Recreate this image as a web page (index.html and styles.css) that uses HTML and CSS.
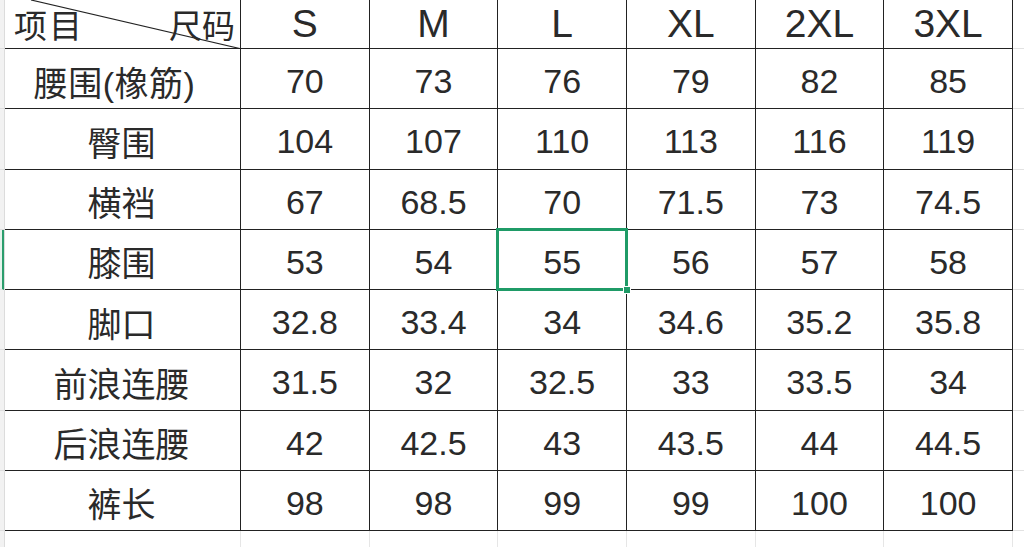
FILE: index.html
```html
<!DOCTYPE html>
<html lang="zh">
<head>
<meta charset="utf-8">
<title>尺码表</title>
<link rel="stylesheet" href="styles.css">
</head>
<body>
<div class="sheet">
  <div class="rowheads">
    <div class="rh rh-top"></div>
    <div class="rh"></div>
    <div class="rh"></div>
    <div class="rh"></div>
    <div class="rh active"></div>
    <div class="rh"></div>
    <div class="rh"></div>
    <div class="rh"></div>
    <div class="rh"></div>
    <div class="rh rh-tail"></div>
  </div>
  <div class="grid">
    <div class="c head corner">
      <svg class="diag" width="237" height="49" viewBox="0 0 237 49"><line x1="26" y1="0" x2="237" y2="49" stroke="#222" stroke-width="1.2"/></svg>
      <span class="corner-l">项目</span><span class="corner-r">尺码</span>
    </div>
    <div class="c head">S</div><div class="c head">M</div><div class="c head">L</div><div class="c head">XL</div><div class="c head">2XL</div><div class="c head">3XL</div><div class="x"></div>

    <div class="c lab lab-wide">腰围(橡筋)</div><div class="c">70</div><div class="c">73</div><div class="c">76</div><div class="c">79</div><div class="c">82</div><div class="c">85</div><div class="x"></div>
    <div class="c lab">臀围</div><div class="c">104</div><div class="c">107</div><div class="c">110</div><div class="c">113</div><div class="c">116</div><div class="c">119</div><div class="x"></div>
    <div class="c lab">横裆</div><div class="c">67</div><div class="c">68.5</div><div class="c">70</div><div class="c">71.5</div><div class="c">73</div><div class="c">74.5</div><div class="x"></div>
    <div class="c lab">膝围</div><div class="c">53</div><div class="c">54</div><div class="c sel">55</div><div class="c">56</div><div class="c">57</div><div class="c">58</div><div class="x"></div>
    <div class="c lab">脚口</div><div class="c">32.8</div><div class="c">33.4</div><div class="c">34</div><div class="c">34.6</div><div class="c">35.2</div><div class="c">35.8</div><div class="x"></div>
    <div class="c lab">前浪连腰</div><div class="c">31.5</div><div class="c">32</div><div class="c">32.5</div><div class="c">33</div><div class="c">33.5</div><div class="c">34</div><div class="x"></div>
    <div class="c lab">后浪连腰</div><div class="c">42</div><div class="c">42.5</div><div class="c">43</div><div class="c">43.5</div><div class="c">44</div><div class="c">44.5</div><div class="x"></div>
    <div class="c lab">裤长</div><div class="c">98</div><div class="c">98</div><div class="c">99</div><div class="c">99</div><div class="c">100</div><div class="c">100</div><div class="x"></div>

    <div class="t"></div><div class="t"></div><div class="t"></div><div class="t"></div><div class="t"></div><div class="t"></div><div class="t"></div><div class="t last"></div>
  </div>
</div>
</body>
</html>
```

FILE: styles.css
```css
html, body {
  margin: 0;
  padding: 0;
  background: #ffffff;
}

.sheet {
  display: flex;
  width: 1024px;
  height: 547px;
  overflow: hidden;
  font-family: "Liberation Sans", "Noto Sans CJK SC", sans-serif;
  color: #2a2a2a;
}

.rowheads {
  width: 4px;
  flex: none;
  display: flex;
  flex-direction: column;
  background: #f2f2f2;
  border-right: 1px solid #dcdcdc;
}

.rh {
  height: 60.25px;
  box-sizing: border-box;
  border-bottom: 1px solid #dedede;
}

.rh-top {
  height: 49px;
}

.rh-tail {
  flex: 1;
  border-bottom: none;
}

.rh.active {
  background: #e6f3ec;
  border-right: 2px solid #2a9d6c;
}

.grid {
  flex: 1;
  display: grid;
  grid-template-columns: 236px repeat(6, 128.67px) 1fr;
  grid-template-rows: 49px repeat(8, 60.25px) 1fr;
}

.c {
  box-sizing: border-box;
  border-right: 1px solid #222;
  border-bottom: 1px solid #222;
  display: flex;
  align-items: center;
  justify-content: center;
  font-size: 34px;
  padding-top: 6px;
  white-space: nowrap;
}

.c.head {
  font-size: 39px;
  padding-top: 0;
}

.c.lab {
  font-size: 34px;
  padding-top: 5px;
  padding-right: 2px;
}

.c.lab-wide {
  padding-right: 16px;
  letter-spacing: 0.5px;
}

.corner {
  position: relative;
  justify-content: space-between;
  padding: 0 5px 0 9px;
}

.corner-l, .corner-r {
  position: relative;
  font-size: 33px;
  letter-spacing: 2px;
}

.corner-r {
  letter-spacing: 0;
}

.diag {
  position: absolute;
  left: 0;
  top: 0;
}

.x {
  border-bottom: 1px solid #e2e2e2;
}

.t {
  border-right: 1px solid #e6e6e6;
}

.t.last {
  border-right: none;
}

.sel {
  position: relative;
}

.sel::after {
  content: "";
  position: absolute;
  left: -2px;
  top: -2px;
  right: -2px;
  bottom: -2px;
  border: 3px solid #1f9b67;
}

.sel::before {
  content: "";
  position: absolute;
  right: -5px;
  bottom: -5px;
  width: 6px;
  height: 6px;
  background: #1f9b67;
  border: 1px solid #fff;
  z-index: 2;
}
```
